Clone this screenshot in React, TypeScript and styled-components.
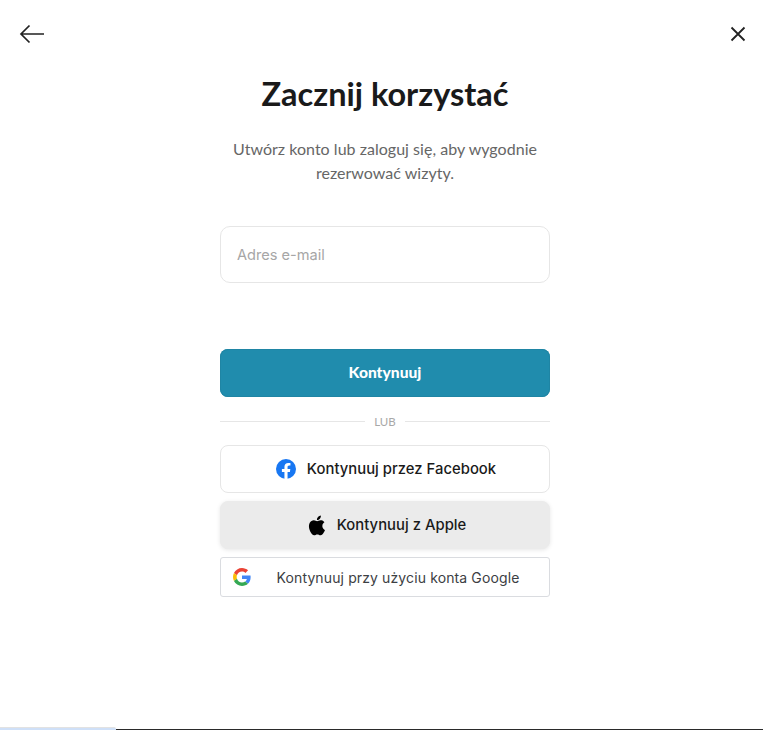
import React from "react";
import styled, { createGlobalStyle } from "styled-components";

const Global = createGlobalStyle`
  html, body { margin: 0; padding: 0; background: #fff; }
  body { font-family: "Lato", "Liberation Sans", sans-serif; color: #1a1a1a; }
`;

const Page = styled.div`
  position: relative;
  width: 763px;
  height: 730px;
  overflow: hidden;
  background: #fff;
`;

const TopBar = styled.div`
  display: flex;
  justify-content: space-between;
  align-items: center;
  padding: 20px 17px 0 18px;
  height: 28px;
`;

const IconButton = styled.button`
  display: flex;
  padding: 0;
  border: 0;
  background: none;
  color: #222;
`;

const Content = styled.main`
  width: 330px;
  margin: 0 auto;
  display: flex;
  flex-direction: column;
  position: relative;
  left: 3.5px;
`;

const Title = styled.h1`
  margin: 24px 0 0;
  height: 44px;
  line-height: 44px;
  font-size: 32.5px;
  font-weight: 700;
  text-align: center;
  color: #1a1a1a;
  white-space: nowrap;
`;

const Subtitle = styled.p`
  margin: 21px 0 0;
  font-size: 16px;
  font-weight: 400;
  letter-spacing: 0.03px;
  line-height: 24px;
  text-align: center;
  color: #666;
  white-space: nowrap;
`;

const EmailField = styled.input`
  box-sizing: border-box;
  margin-top: 41px;
  height: 57px;
  padding: 0 16px;
  border: 1px solid #e6e6e6;
  border-radius: 10px;
  font-family: "Inter", sans-serif;
  font-size: 14.6px;
  outline: none;
  &::placeholder { color: #a6a6a6; opacity: 1; }
`;

const PrimaryButton = styled.button`
  margin-top: 66px;
  height: 48px;
  padding: 0 0 2px;
  border: 0;
  border-radius: 8px;
  background: #208cad;
  box-shadow: inset 0 0 0 1px #1f85a4;
  color: #fff;
  font-family: inherit;
  font-size: 15.6px;
  font-weight: 900;
`;

const Divider = styled.div`
  display: flex;
  align-items: center;
  gap: 9px;
  height: 48px;
  font-family: "Lato", sans-serif;
  font-size: 11.5px;
  color: #a8a8a8;
  &::before, &::after {
    content: "";
    flex: 1;
    height: 1px;
    background: #e6e6e6;
  }
`;

const SocialStack = styled.div`
  display: flex;
  flex-direction: column;
  gap: 8px;
`;

const SocialButton = styled.button<{ $variant?: "apple" }>`
  box-sizing: border-box;
  height: 48px;
  display: flex;
  align-items: center;
  justify-content: center;
  gap: ${(p) => (p.$variant === "apple" ? "8px" : "11px")};
  padding: 0 0 0 2px;
  border-radius: 8px;
  border: 1px solid ${(p) => (p.$variant === "apple" ? "#ebebeb" : "#e6e6e6")};
  background: ${(p) => (p.$variant === "apple" ? "#ebebeb" : "#fff")};
  box-shadow: ${(p) => (p.$variant === "apple" ? "0 1px 4px rgba(0,0,0,0.1)" : "none")};
  font-family: "Inter", sans-serif;
  font-size: 14.8px;
  font-weight: 500;
  letter-spacing: 0.03px;
  color: #1a1a1a;
`;

const GoogleButton = styled.button`
  box-sizing: border-box;
  height: 40px;
  display: flex;
  align-items: center;
  padding: 0 12px;
  border: 1px solid #dadce0;
  border-radius: 3px;
  background: #fff;
  font-family: "Inter", sans-serif;
  font-size: 14px;
  font-weight: 400;
  letter-spacing: 0.12px;
  color: #3c4043;
`;

const GoogleLabel = styled.span`
  flex: 1;
  text-align: center;
  padding-left: 8px;
  white-space: nowrap;
`;

const BottomLine = styled.div`
  position: absolute;
  left: 116px;
  right: 0;
  bottom: 0;
  height: 1px;
  background: #2a2a2a;
`;

const BottomTab = styled.div`
  position: absolute;
  left: 0;
  bottom: 0;
  width: 116px;
  height: 3px;
  background: #cfe0f8;
  border-top: 1px solid #e2e2e2;
  box-sizing: border-box;
  border-top-right-radius: 2px;
`;

const ArrowIcon = () => (
  <svg width="28" height="28" viewBox="0 0 28 28" fill="none" stroke="currentColor" strokeWidth="1.7">
    <path d="M26 14H3M11.5 5.5 3 14l8.5 8.5" />
  </svg>
);

const CloseIcon = () => (
  <svg width="16" height="16" viewBox="0 0 16 16" fill="none" stroke="currentColor" strokeWidth="1.8">
    <path d="M1.5 1.5l13 13M14.5 1.5l-13 13" />
  </svg>
);

const FacebookIcon = () => (
  <svg width="20" height="20" viewBox="0 0 24 24">
    <circle cx="12" cy="12" r="12" fill="#1877f2" />
    <path fill="#fff" d="M16.67 15.47 17.2 12h-3.33V9.75c0-.95.47-1.87 1.96-1.87h1.51V4.92s-1.37-.23-2.68-.23c-2.74 0-4.53 1.66-4.53 4.67V12H7.08v3.47h3.05v8.39a12.1 12.1 0 0 0 3.74 0v-8.39h2.8z" />
  </svg>
);

const AppleIcon = () => (
  <svg width="23" height="23" viewBox="0 0 24 24" fill="#000">
    <path d="M17.05 12.54c-.03-2.6 2.12-3.85 2.22-3.91-1.21-1.77-3.09-2.01-3.76-2.04-1.6-.16-3.12.94-3.93.94-.81 0-2.06-.92-3.39-.89-1.74.03-3.35 1.01-4.25 2.57-1.81 3.14-.46 7.79 1.3 10.34.86 1.25 1.89 2.65 3.24 2.6 1.3-.05 1.79-.84 3.36-.84 1.57 0 2.01.84 3.39.81 1.4-.02 2.28-1.27 3.14-2.53.99-1.45 1.4-2.85 1.42-2.92-.03-.01-2.72-1.04-2.74-4.13zM14.47 4.9c.72-.87 1.2-2.07 1.07-3.27-1.03.04-2.28.69-3.02 1.55-.66.77-1.24 1.99-1.09 3.17 1.15.09 2.33-.58 3.04-1.45z" />
  </svg>
);

const GoogleIcon = () => (
  <svg width="18" height="18" viewBox="0 0 48 48">
    <path fill="#EA4335" d="M24 9.5c3.54 0 6.71 1.22 9.21 3.6l6.85-6.85C35.9 2.38 30.47 0 24 0 14.62 0 6.51 5.38 2.56 13.22l7.98 6.19C12.43 13.72 17.74 9.5 24 9.5z" />
    <path fill="#4285F4" d="M46.98 24.55c0-1.57-.15-3.09-.38-4.55H24v9.02h12.94c-.58 2.96-2.26 5.48-4.78 7.18l7.73 6c4.51-4.18 7.09-10.36 7.09-17.65z" />
    <path fill="#FBBC05" d="M10.53 28.59c-.48-1.45-.76-2.99-.76-4.59s.27-3.14.76-4.59l-7.98-6.19C.92 16.46 0 20.12 0 24c0 3.88.92 7.54 2.56 10.78l7.97-6.19z" />
    <path fill="#34A853" d="M24 48c6.48 0 11.93-2.13 15.89-5.81l-7.73-6c-2.15 1.45-4.92 2.3-8.16 2.3-6.26 0-11.57-4.22-13.47-9.91l-7.98 6.19C6.51 42.62 14.62 48 24 48z" />
  </svg>
);

export default function App() {
  return (
    <Page>
      <Global />
      <TopBar>
        <IconButton aria-label="Wstecz"><ArrowIcon /></IconButton>
        <IconButton aria-label="Zamknij"><CloseIcon /></IconButton>
      </TopBar>
      <Content>
        <Title>Zacznij korzystać</Title>
        <Subtitle>
          Utwórz konto lub zaloguj się, aby wygodnie
          <br />
          rezerwować wizyty.
        </Subtitle>
        <EmailField placeholder="Adres e-mail" />
        <PrimaryButton>Kontynuuj</PrimaryButton>
        <Divider>LUB</Divider>
        <SocialStack>
          <SocialButton><FacebookIcon />Kontynuuj przez Facebook</SocialButton>
          <SocialButton $variant="apple"><AppleIcon />Kontynuuj z Apple</SocialButton>
          <GoogleButton><GoogleIcon /><GoogleLabel>Kontynuuj przy użyciu konta Google</GoogleLabel></GoogleButton>
        </SocialStack>
      </Content>
      <BottomTab />
      <BottomLine />
    </Page>
  );
}
